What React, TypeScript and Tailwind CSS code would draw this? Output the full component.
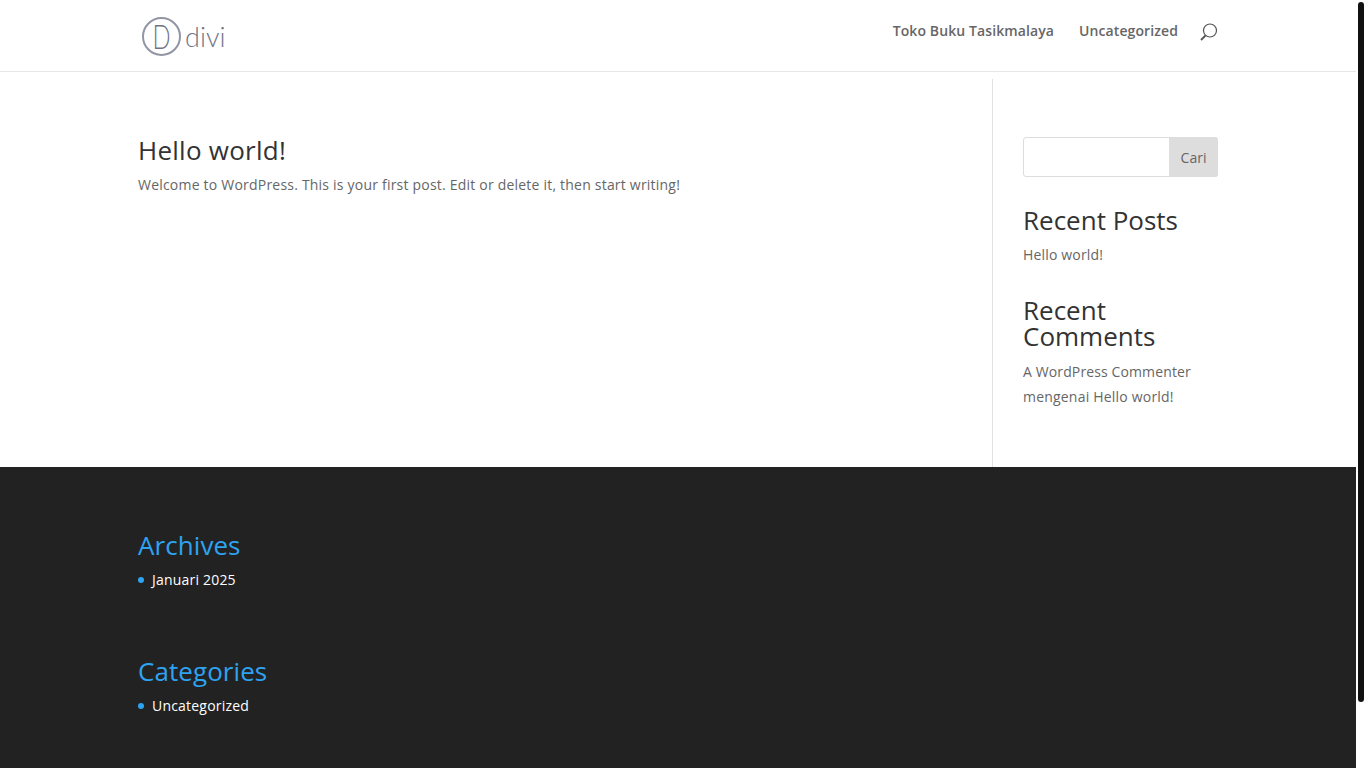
const font = { fontFamily: '"Open Sans", sans-serif' }

function Logo() {
  return (
    <div className="flex items-center h-[40px] w-[84px] ml-[4px]">
      <div className="w-[39px] h-[39px] rounded-full border-2 border-[#9195a4] flex items-center justify-center shrink-0">
        <span className="inline-block scale-x-[0.72] text-[33px] leading-none font-light text-[#6f7485] font-['Lato',sans-serif]">D</span>
      </div>
      <span className="ml-[4px] text-[27px] leading-none font-light text-[#6f7485] font-['Lato',sans-serif]">divi</span>
    </div>
  )
}

function SearchIcon() {
  return (
    <svg width="18" height="18" viewBox="0 0 18 18" fill="none" stroke="#555" className="mt-[5px]">
      <circle cx="10" cy="7.5" r="6.5" strokeWidth="1.2" />
      <path d="M5.5 12.5 1 17" strokeWidth="1.8" />
    </svg>
  )
}

function WidgetTitle({ children, className = '' }: { children: React.ReactNode; className?: string }) {
  return <h4 className={`text-[26px] leading-[26px] text-[#333] ${className}`}>{children}</h4>
}

function FooterWidget({ title, item, className = '' }: { title: string; item: string; className?: string }) {
  return (
    <div className={className}>
      <h4 className="text-[26px] leading-[31px] text-[#2ea3f2] tracking-[0.07px]">{title}</h4>
      <div className="flex items-center mt-[6px] h-[25px] text-[14px] text-white tracking-[0.2px]">
        <span className="w-[6px] h-[6px] rounded-full bg-[#2ea3f2] mr-[8px]" />
        {item}
      </div>
    </div>
  )
}

export default function App() {
  return (
    <div className="flex h-screen overflow-hidden bg-white text-[14px] text-[#666]" style={font}>
      <div className="w-[1356px] shrink-0 flex flex-col">
        <header className="h-[72px] border-b border-[#e6e6e6] flex items-start justify-between pl-[138px] pr-[138px] shrink-0">
          <div className="mt-[16px]"><Logo /></div>
          <nav className="flex items-start mt-[18px] font-semibold text-[14px] text-[#666] leading-[25px] tracking-[0.1px]">
            <a className="mr-[25px]">Toko Buku Tasikmalaya</a>
            <a className="mr-[22px]">Uncategorized</a>
            <SearchIcon />
          </nav>
        </header>

        <main className="h-[395px] shrink-0 flex pl-[138px] pr-[138px]">
          <div className="w-[854px] pt-[56px] mt-[7px] shrink-0">
            <h2 className="text-[26px] leading-[31px] text-[#333] tracking-[0.25px]">Hello world!</h2>
            <p className="mt-[6px] leading-[25px] tracking-[0.21px]">Welcome to WordPress. This is your first post. Edit or delete it, then start writing!</p>
          </div>
          <aside className="mt-[7px] flex-1 border-l border-[#e2e2e2] pl-[30px] pt-[58px]">
            <div className="flex h-[40px] border border-[#ddd] rounded-[3px]">
              <div className="flex-1" />
              <button className="w-[49px] -my-px -mr-px bg-[#ddd] rounded-r-[3px] text-[14px] text-[#666]">Cari</button>
            </div>
            <WidgetTitle className="mt-[30px]">Recent Posts</WidgetTitle>
            <p className="mt-[9px] leading-[25px] tracking-[0.17px]">Hello world!</p>
            <WidgetTitle className="mt-[30px]">Recent Comments</WidgetTitle>
            <p className="mt-[10px] leading-[25px] tracking-[0.12px]">
              A WordPress Commenter <span className="tracking-[0.2px]">mengenai Hello world!</span>
            </p>
          </aside>
        </main>

        <footer className="flex-1 bg-[#222] pl-[138px] pt-[63px]">
          <FooterWidget title="Archives" item="Januari 2025" />
          <FooterWidget title="Categories" item="Uncategorized" className="mt-[64px]" />
        </footer>
      </div>

      <div className="w-[10px] shrink-0 pl-[2px] pr-[2px] pt-[2px]">
        <div className="h-[700px] bg-[#111] rounded-[3px]" />
      </div>
    </div>
  )
}
